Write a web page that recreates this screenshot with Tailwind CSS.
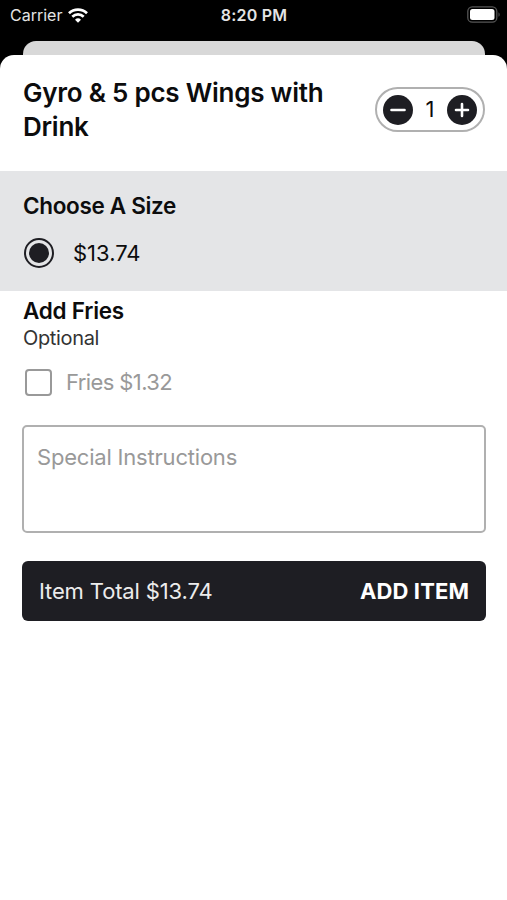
<!DOCTYPE html>
<html lang="en">
<head>
  <meta charset="UTF-8" />
  <meta name="viewport" content="width=device-width, initial-scale=1.0"/>
  <title>Gyro &amp; 5 pcs Wings with Drink</title>
  <script src="https://cdn.jsdelivr.net/npm/@tailwindcss/browser@4"></script>
</head>
<body class="bg-black font-['Inter','Liberation_Sans',sans-serif] text-[#0c0c0d] h-[900px] flex flex-col overflow-hidden whitespace-nowrap">

  <!-- Status bar -->
  <div class="h-[41px] shrink-0 grid grid-cols-3 items-start pt-[5px] pl-[10px] pr-[7px] text-[#e4e4e4] text-[16px] leading-5">
    <div class="flex items-center gap-[6px]">
      <span>Carrier</span>
      <svg class="w-5 h-[15px]" viewBox="0 0 20 15" fill="none" stroke="#fff" stroke-width="2.7">
        <path d="M1 5.200a12.900 12.900 0 0 1 18 0" />
        <path d="M4.300 8.700a8.200 8.200 0 0 1 11.400 0" />
        <path d="M10 14.800l-3-3.100a4.400 4.400 0 0 1 6 0z" fill="#fff" stroke="none" />
      </svg>
    </div>
    <div class="text-center font-semibold tracking-[0.2px] pr-[2px]">8:20 PM</div>
    <svg class="mt-px w-[33px] h-[17px] justify-self-end" viewBox="0 0 33 17">
      <rect x="0.8" y="0.8" width="29" height="15.400" rx="4.500" fill="none" stroke="#555" stroke-width="1.300" />
      <rect x="3" y="3" width="24.500" height="11" rx="2.500" fill="#fff" />
      <path d="M31.500 6.200c1.500.7 1.500 3.900 0 4.600z" fill="#555" />
    </svg>
  </div>

  <!-- Sheet behind -->
  <div class="h-[14px] shrink-0 ml-[23px] mr-[22px] bg-[#d8d8d8] rounded-t-[13px]"></div>

  <!-- Item sheet -->
  <main class="grow bg-white rounded-t-[14px]">
    <header class="h-[116px] flex items-start justify-between pl-[23px] pr-[22px] pt-[21px]">
      <h1 class="text-[26px] leading-[34px] font-semibold tracking-[-0.24px]">Gyro &amp; 5 pcs Wings with<br>Drink</h1>
      <div class="mt-[11px] w-[110px] h-[45px] shrink-0 border-2 border-[#b0b0b0] rounded-full flex items-center justify-between px-[6px]">
        <button type="button" aria-label="Remove one">
          <svg class="block w-[30px] h-[30px]" viewBox="0 0 30 30" stroke="#fff" stroke-width="2.600" stroke-linecap="round">
            <circle cx="15" cy="15" r="15" fill="#1e1e23" stroke="none" />
            <path d="M8.500 15h13" />
          </svg>
        </button>
        <span class="text-[22px]">1</span>
        <button type="button" aria-label="Add one">
          <svg class="block w-[30px] h-[30px]" viewBox="0 0 30 30" stroke="#fff" stroke-width="2.600" stroke-linecap="round">
            <circle cx="15" cy="15" r="15" fill="#1e1e23" stroke="none" />
            <path d="M9 15h12M15 9v12" />
          </svg>
        </button>
      </div>
    </header>

    <!-- Size -->
    <section class="h-[120px] bg-[#e4e5e7] pl-[23px] pt-5">
      <h2 class="text-[22.500px] leading-[30px] font-semibold tracking-[-0.33px]">Choose A Size</h2>
      <div class="mt-[17px] ml-px flex items-center h-[30px]">
        <span class="w-[30px] h-[30px] rounded-full border-2 border-[#1e1e23] flex items-center justify-center">
          <span class="w-5 h-5 rounded-full bg-[#1e1e23]"></span>
        </span>
        <span class="ml-[19px] text-[22px]">$13.74</span>
      </div>
    </section>

    <!-- Fries -->
    <section class="pl-[23px] pt-[6px]">
      <h2 class="text-[22.500px] leading-[28px] font-semibold tracking-[-0.25px]">Add Fries</h2>
      <p class="text-[20px] leading-[26px] text-[#333] tracking-[-0.35px]">Optional</p>
      <div class="mt-[17px] ml-[2px] flex items-center h-[28px]">
        <span class="w-[27px] h-[27px] rounded-[4px] border-2 border-[#999]"></span>
        <span class="ml-[14px] text-[22px] text-[#999] tracking-[-0.6px]">Fries $1.32</span>
      </div>
    </section>

    <!-- Instructions -->
    <div class="mt-[29px] ml-[22px] mr-[21px] h-[108px] border-2 border-[#b0b0b0] rounded-[5px] pl-[13px] pt-[15px] text-[22px] leading-[30px] text-[#999] tracking-[-0.2px]">Special Instructions</div>

    <!-- Total -->
    <button type="button" class="mt-[28px] ml-[22px] w-[464px] h-[60px] bg-[#1e1e23] rounded-[6px] flex items-center justify-between pl-[17px] pr-[17px] text-[22px]">
      <span class="text-[#ececec] tracking-[-0.14px]">Item Total $13.74</span>
      <span class="text-white font-bold tracking-[0.1px]">ADD ITEM</span>
    </button>
  </main>

</body>
</html>
